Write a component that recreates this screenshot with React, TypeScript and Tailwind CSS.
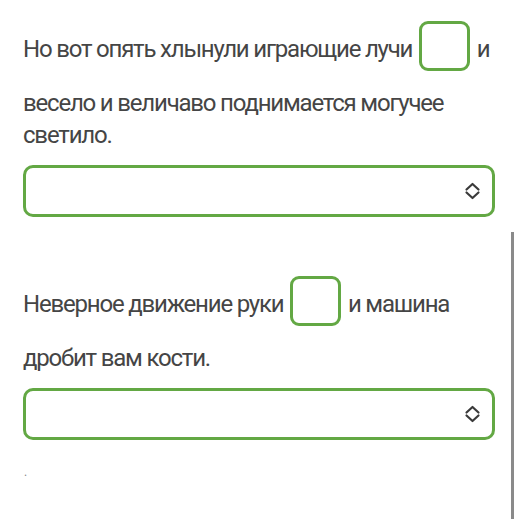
function Gap() {
  return (
    <span className="inline-block w-[51px] h-[50px] mx-[2px] mb-4 align-[-30px] rounded-[9px] border-[3px] border-[#63a844] bg-white" />
  );
}

function Chevrons() {
  return (
    <svg width="17" height="18" viewBox="0 0 17 18" fill="none" stroke="#3a3a3a" strokeWidth="2.2" strokeLinecap="round" strokeLinejoin="round">
      <path d="M2.5 7.5 L8.5 2 L14.5 7.5" />
      <path d="M2.5 10.5 L8.5 16 L14.5 10.5" />
    </svg>
  );
}

function Dropdown() {
  return (
    <div className="mt-[14px] h-[52px] rounded-[10px] border-[3px] border-[#63a844] bg-white flex items-center justify-end pr-[11px]">
      <Chevrons />
    </div>
  );
}

export default function App() {
  return (
    <div className="relative w-[518px] h-[519px] overflow-hidden bg-white font-['Roboto',sans-serif] text-[#454545]">
      <div className="px-[23px] pt-[21px]">
        <p className="text-[24px] leading-[32px] tracking-[-1.2px]">
          Но вот опять хлынули играющие лучи <Gap /> и весело и величаво поднимается могучее светило.
        </p>
        <Dropdown />

        <p className="mt-[59px] text-[24px] leading-[32px] tracking-[-1.2px]">
          Неверное движение руки <Gap /> и машина дробит вам кости.
        </p>
        <Dropdown />

        <p className="mt-[26px] pl-[1px] text-[12px] leading-[12px] text-[#888]">.</p>
      </div>

      <div className="absolute right-[4px] top-[232px] bottom-0 w-[3px] bg-[#8a8a8a]" />
    </div>
  );
}
